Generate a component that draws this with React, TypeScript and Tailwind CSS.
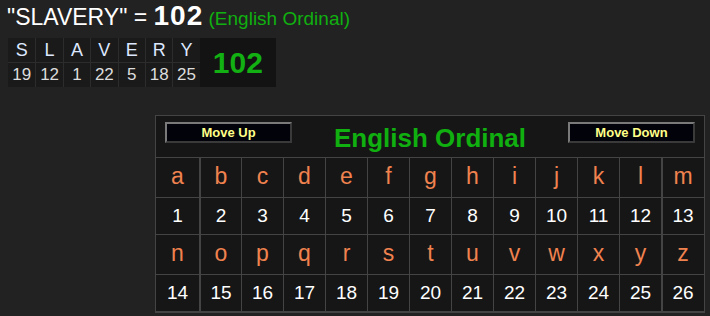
import React from 'react';

const word = [
  { ch: 'S', v: 19 },
  { ch: 'L', v: 12 },
  { ch: 'A', v: 1 },
  { ch: 'V', v: 22 },
  { ch: 'E', v: 5 },
  { ch: 'R', v: 18 },
  { ch: 'Y', v: 25 },
];

const alphabet = 'abcdefghijklmnopqrstuvwxyz'.split('');

function MoveButton({ label }: { label: string }) {
  return (
    <button className="w-[127px] h-[21px] bg-[#02020a] border-2 border-t-[#7a7a7a] border-l-[#7a7a7a] border-r-[#3a3a3a] border-b-[#3a3a3a] text-[#ffff88] text-[13px] font-bold leading-none">
      {label}
    </button>
  );
}

function cellEdge(i: number) {
  if (i === 0) return '';
  return i === 1 || i === 12 ? 'border-l-2 border-[#444]' : 'border-l border-[#444]';
}

function LetterRows({ letters, offset }: { letters: string[]; offset: number }) {
  return (
    <>
      <div className="grid grid-cols-[43px_repeat(11,42px)_42px] border-b border-[#444]">
        {letters.map((l, i) => (
          <div
            key={l}
            className={`h-[39px] flex items-center justify-center text-[23px] text-[#f0824f] pb-[3px] ${cellEdge(i)}`}
          >
            {l}
          </div>
        ))}
      </div>
      <div className="grid grid-cols-[43px_repeat(11,42px)_42px] border-b border-[#444]">
        {letters.map((l, i) => (
          <div
            key={l}
            className={`h-[36px] flex items-center justify-center text-[19px] text-white ${cellEdge(i)}`}
          >
            {i + 1 + offset}
          </div>
        ))}
      </div>
    </>
  );
}

export default function App() {
  return (
    <div className="w-[710px] h-[316px] bg-[#222222] overflow-hidden font-['Liberation_Sans',Arial,sans-serif]">
      {/* phrase and its total */}
      <div className="pl-[7px] pt-[4px] h-[30px] flex items-baseline whitespace-pre">
        <span className="text-[23px] text-white leading-[24px]">"SLAVERY" = </span>
        <span className="text-[28px] font-bold text-white leading-[24px] tracking-[1px]">102</span>
        <span className="text-[19px] text-[#10b010] leading-[24px]"> (English Ordinal)</span>
      </div>

      {/* letter breakdown */}
      <div className="ml-[8px] mt-[8px] flex w-[268px] h-[49px] bg-[#1a1a1a]">
        <div className="flex flex-col">
          <div className="flex h-[25px] border-b border-[#2c2c2c]">
            {word.map((w, i) => (
              <div
                key={i}
                className={`w-[27.4px] flex items-center justify-center text-[18px] text-[#dde8ff] ${i > 0 ? 'border-l border-[#2c2c2c]' : ''}`}
              >
                {w.ch}
              </div>
            ))}
          </div>
          <div className="flex h-[24px]">
            {word.map((w, i) => (
              <div
                key={i}
                className={`w-[27.4px] flex items-center justify-center text-[17px] text-[#dddddd] ${i > 0 ? 'border-l border-[#2c2c2c]' : ''}`}
              >
                {w.v}
              </div>
            ))}
          </div>
        </div>
        <div className="flex-1 flex items-center justify-center bg-[#131313] text-[30px] font-bold text-[#12b012]">
          102
        </div>
      </div>

      {/* cipher chart */}
      <div className="ml-[155px] mt-[28px] w-[550px] border border-[#444] bg-[#161616]">
        <div className="h-[42px] flex items-start justify-between px-[9px] pt-[6px] border-b border-[#444]">
          <MoveButton label="Move Up" />
          <span className="text-[26px] font-bold text-[#10b010] leading-[30px] mt-[1px]">English Ordinal</span>
          <MoveButton label="Move Down" />
        </div>
        <LetterRows letters={alphabet.slice(0, 13)} offset={0} />
        <LetterRows letters={alphabet.slice(13)} offset={13} />
      </div>
    </div>
  );
}
